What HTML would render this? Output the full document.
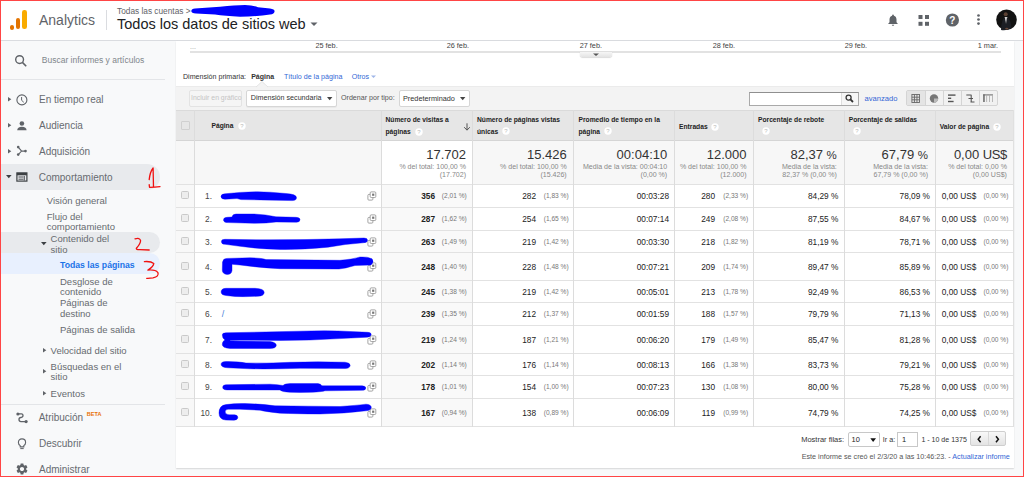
<!DOCTYPE html><html><head><meta charset="utf-8"><style>
html,body{margin:0;padding:0;}
body{width:1024px;height:477px;overflow:hidden;position:relative;background:#f8f9fa;font-family:"Liberation Sans", sans-serif;}
.t{position:absolute;white-space:nowrap;line-height:1;}
</style></head><body><div style="position:absolute;left:0px;top:0px;width:1024px;height:40px;background:#fff"></div>
<div style="position:absolute;left:0px;top:40px;width:1024px;height:1px;background:#dadce0"></div>
<div style="position:absolute;left:9.8px;top:24.5px;width:4.7px;height:5px;background:#e37400;border-radius:2.4px"></div>
<div style="position:absolute;left:15.7px;top:17.6px;width:4.7px;height:11.9px;background:#e37400;border-radius:2.4px"></div>
<div style="position:absolute;left:22px;top:10.3px;width:4.6px;height:19.2px;background:#f9ab00;border-radius:2.3px"></div>
<div class="t" style="left:39.00px;top:13.16px;font-size:14px;color:#5f6368;font-weight:normal;">Analytics</div>
<div style="position:absolute;left:106px;top:10px;width:1px;height:20px;background:#dadce0"></div>
<div class="t" style="left:117.00px;top:6.55px;font-size:8.3px;color:#5f6368;font-weight:normal;">Todas las cuentas &gt;</div>
<div class="t" style="left:117.00px;top:17.02px;font-size:14.5px;color:#202124;font-weight:normal;">Todos los datos de sitios web</div>
<svg style="position:absolute;left:0;top:0" width="300" height="30"><path fill="#0000ff" d="M191.3 10.9 Q191.5 8.6 195 8.4 L220 6.7 Q235 5.2 245 5 Q253 5.2 258 7.2 L270 8.4 Q274.6 9 274.6 11.3 Q274.4 14.3 270 14.6 Q258 16.5 240 16.7 Q225 16 215 14.6 L196 13.4 Q191.3 13.2 191.3 10.9 Z"/></svg>
<svg style="position:absolute;left:310px;top:22px" width="8" height="5"><path d="M0.5 0.5 L7.5 0.5 L4 4z" fill="#5f6368"/></svg>
<svg style="position:absolute;left:886px;top:13px" width="14" height="14" viewBox="0 0 24 24"><path fill="#5f6368" d="M12 22c1.1 0 2-.9 2-2h-4c0 1.1.9 2 2 2zm6-6v-5c0-3.07-1.64-5.64-4.5-6.32V4c0-.83-.67-1.5-1.5-1.5s-1.5.67-1.5 1.5v.68C7.63 5.36 6 7.92 6 11v5l-2 2v1h16v-1l-2-2z"/></svg>
<svg style="position:absolute;left:918px;top:15px" width="12" height="11"><rect x="0.5" y="0" width="4" height="4" fill="#5f6368"/><rect x="7" y="0" width="4" height="4" fill="#5f6368"/><rect x="0.5" y="6.8" width="4" height="4" fill="#5f6368"/><rect x="7" y="6.8" width="4" height="4" fill="#5f6368"/></svg>
<svg style="position:absolute;left:945px;top:13px" width="15" height="15" viewBox="0 0 15 15"><circle cx="7.4" cy="7" r="6.6" fill="#5f6368"/><text x="7.4" y="10.6" font-family="Liberation Sans" font-weight="bold" font-size="10" fill="#fff" text-anchor="middle">?</text></svg>
<svg style="position:absolute;left:976px;top:13px" width="5" height="13"><circle cx="2.5" cy="2.5" r="1.35" fill="#5f6368"/><circle cx="2.5" cy="6.5" r="1.35" fill="#5f6368"/><circle cx="2.5" cy="10.6" r="1.35" fill="#5f6368"/></svg>
<svg style="position:absolute;left:995px;top:8px" width="24" height="24" viewBox="0 0 24 24"><circle cx="11.5" cy="11.8" r="10.3" fill="#121212"/><path d="M9.6 9 L10.5 16.5 L12.2 16.5 L12.4 9z" fill="#cfcfcf"/><path d="M6 22 Q6.5 11 9.8 9.5 L11 16 L12 9.5 Q15.5 10.5 16.5 20 Q12 23 6 22z" fill="#1c1e24"/><circle cx="10.7" cy="6.2" r="2" fill="#5a4032"/><ellipse cx="11.8" cy="20.6" rx="1.6" ry="0.9" fill="#6a4a3a"/></svg>
<div style="position:absolute;left:0px;top:41px;width:176px;height:436px;background:#f8f9fa"></div>
<svg style="position:absolute;left:14px;top:54px" width="14" height="14" viewBox="0 0 14 14"><circle cx="5.6" cy="5.6" r="3.9" fill="none" stroke="#5f6368" stroke-width="1.4"/><path d="M8.4 8.4 L12.2 12.2" stroke="#5f6368" stroke-width="1.6"/></svg>
<div class="t" style="left:41.80px;top:56.15px;font-size:8.5px;color:#80868b;font-weight:normal;">Buscar informes y artículos</div>
<div style="position:absolute;left:0px;top:79px;width:165px;height:1px;background:#e3e5e8"></div>
<div style="position:absolute;left:0px;top:164px;width:160px;height:25.5px;background:#e8eaed;border-radius:0 13px 13px 0"></div>
<div style="position:absolute;left:0px;top:232.2px;width:160px;height:21px;background:#e8eaed;border-radius:0 11px 11px 0"></div>
<div style="position:absolute;left:0px;top:253.2px;width:160px;height:21.2px;background:#e8f0fe;border-radius:0 11px 11px 0"></div>
<svg style="position:absolute;left:7.6px;top:97.2px" width="4" height="5"><path d="M0 0 L3.3 2.2 L0 4.4z" fill="#5f6368"/></svg>
<svg style="position:absolute;left:16px;top:93.5px" width="12" height="12" viewBox="0 0 12 12"><circle cx="5.9" cy="5.9" r="5" fill="none" stroke="#5f6368" stroke-width="1.1"/><path d="M5.6 3 L5.6 6.3 L7.8 8.3" fill="none" stroke="#5f6368" stroke-width="1"/></svg>
<div class="t" style="left:39.00px;top:95.02px;font-size:10px;color:#676b70;font-weight:normal;">En tiempo real</div>
<svg style="position:absolute;left:7.6px;top:123.3px" width="4" height="5"><path d="M0 0 L3.3 2.2 L0 4.4z" fill="#5f6368"/></svg>
<svg style="position:absolute;left:16px;top:119.5px" width="12" height="12" viewBox="0 0 12 12"><circle cx="5.9" cy="3.5" r="2.3" fill="#5f6368"/><path d="M1.2 10.2 Q1.4 6.9 5.9 6.8 Q10.4 6.9 10.6 10.2z" fill="#5f6368"/></svg>
<div class="t" style="left:39.00px;top:121.02px;font-size:10px;color:#676b70;font-weight:normal;">Audiencia</div>
<svg style="position:absolute;left:7.6px;top:148.9px" width="4" height="5"><path d="M0 0 L3.3 2.2 L0 4.4z" fill="#5f6368"/></svg>
<svg style="position:absolute;left:16px;top:145px" width="12" height="12" viewBox="0 0 12 12"><circle cx="2.2" cy="2.1" r="1.3" fill="#5f6368"/><circle cx="2.2" cy="9.6" r="1.3" fill="#5f6368"/><circle cx="9.5" cy="6.1" r="1.3" fill="#5f6368"/><path d="M2.2 2.1 L5.6 6.1 L2.2 9.6 M5.6 6.1 L9.5 6.1" fill="none" stroke="#5f6368" stroke-width="1.1"/></svg>
<div class="t" style="left:39.00px;top:146.52px;font-size:10px;color:#676b70;font-weight:normal;">Adquisición</div>
<svg style="position:absolute;left:6.4px;top:174.8px" width="6" height="4"><path d="M0 0 L5.6 0 L2.8 3.3z" fill="#3c4043"/></svg>
<svg style="position:absolute;left:16px;top:171.5px" width="12" height="10" viewBox="0 0 12 10"><rect x="0.9" y="0.9" width="10" height="8.2" fill="none" stroke="#3c4043" stroke-width="1.2"/><rect x="0.9" y="0.9" width="10" height="2.4" fill="#3c4043"/><path d="M2.5 5 H7.5 M2.5 7.2 H7.5 M8.3 4 V8.5" stroke="#3c4043" stroke-width="0.9"/></svg>
<div class="t" style="left:38.70px;top:172.52px;font-size:10px;color:#676b70;font-weight:normal;">Comportamiento</div>
<div class="t" style="left:46.80px;top:196.06px;font-size:9.5px;color:#676b70;font-weight:normal;">Visión general</div>
<div class="t" style="left:46.80px;top:211.66px;font-size:9.5px;color:#676b70;font-weight:normal;">Flujo del</div>
<div class="t" style="left:46.80px;top:222.46px;font-size:9.5px;color:#676b70;font-weight:normal;">comportamiento</div>
<svg style="position:absolute;left:41px;top:241.60000000000002px" width="6" height="4"><path d="M0 0 L5.6 0 L2.8 3.3z" fill="#3c4043"/></svg>
<div class="t" style="left:50.60px;top:233.76px;font-size:9.5px;color:#676b70;font-weight:normal;">Contenido del</div>
<div class="t" style="left:50.60px;top:244.56px;font-size:9.5px;color:#676b70;font-weight:normal;">sitio</div>
<div class="t" style="left:60.00px;top:260.75px;font-size:8.7px;color:#1a73e8;font-weight:bold;">Todas las páginas</div>
<div class="t" style="left:60.00px;top:276.56px;font-size:9.5px;color:#676b70;font-weight:normal;">Desglose de</div>
<div class="t" style="left:60.00px;top:287.36px;font-size:9.5px;color:#676b70;font-weight:normal;">contenido</div>
<div class="t" style="left:60.00px;top:298.26px;font-size:9.5px;color:#676b70;font-weight:normal;">Páginas de</div>
<div class="t" style="left:60.00px;top:309.06px;font-size:9.5px;color:#676b70;font-weight:normal;">destino</div>
<div class="t" style="left:60.00px;top:325.06px;font-size:9.5px;color:#676b70;font-weight:normal;">Páginas de salida</div>
<svg style="position:absolute;left:42.5px;top:347.8px" width="4" height="5"><path d="M0 0 L3.3 2.2 L0 4.4z" fill="#5f6368"/></svg>
<div class="t" style="left:50.60px;top:345.76px;font-size:9.5px;color:#676b70;font-weight:normal;">Velocidad del sitio</div>
<svg style="position:absolute;left:42.5px;top:368.8px" width="4" height="5"><path d="M0 0 L3.3 2.2 L0 4.4z" fill="#5f6368"/></svg>
<div class="t" style="left:50.60px;top:361.56px;font-size:9.5px;color:#676b70;font-weight:normal;">Búsquedas en el</div>
<div class="t" style="left:50.60px;top:372.16px;font-size:9.5px;color:#676b70;font-weight:normal;">sitio</div>
<svg style="position:absolute;left:42.5px;top:390.6px" width="4" height="5"><path d="M0 0 L3.3 2.2 L0 4.4z" fill="#5f6368"/></svg>
<div class="t" style="left:50.60px;top:388.56px;font-size:9.5px;color:#676b70;font-weight:normal;">Eventos</div>
<div style="position:absolute;left:0px;top:404px;width:165px;height:1px;background:#e3e5e8"></div>
<svg style="position:absolute;left:16px;top:411.5px" width="12" height="12" viewBox="0 0 12 12"><circle cx="1.9" cy="2" r="1.6" fill="#5f6368"/><circle cx="10.1" cy="9.6" r="1.6" fill="#5f6368"/><path d="M1.8 1.9 H5.5 Q7 1.9 7 3.6 Q7 5.4 5 5.5 Q3 5.6 3 7.5 Q3 9.6 5 9.6 H10.2" fill="none" stroke="#5f6368" stroke-width="1.3"/></svg>
<div class="t" style="left:38.70px;top:412.92px;font-size:10px;color:#676b70;font-weight:normal;">Atribución</div>
<div class="t" style="left:86.80px;top:411.61px;font-size:5.5px;color:#e8710a;font-weight:bold;">BETA</div>
<svg style="position:absolute;left:17px;top:437.5px" width="10" height="12" viewBox="0 0 10 12"><path d="M5 0.9 Q8.6 0.9 8.6 4.4 Q8.6 6.3 6.8 7.6 V8.9 H3.2 V7.6 Q1.4 6.3 1.4 4.4 Q1.4 0.9 5 0.9z" fill="none" stroke="#5f6368" stroke-width="1.1"/><path d="M3.3 10.6 H6.7" stroke="#5f6368" stroke-width="1"/></svg>
<div class="t" style="left:39.00px;top:438.51px;font-size:10px;color:#676b70;font-weight:normal;">Descubrir</div>
<svg style="position:absolute;left:14.5px;top:462.2px" width="14" height="14" viewBox="0 0 24 24"><path fill="#5f6368" d="M19.14 12.94c.04-.3.06-.61.06-.94 0-.32-.02-.64-.07-.94l2.03-1.58c.18-.14.23-.41.12-.61l-1.92-3.32c-.12-.22-.37-.29-.59-.22l-2.39.96c-.5-.38-1.03-.7-1.62-.94l-.36-2.54c-.04-.24-.24-.41-.48-.41h-3.84c-.24 0-.43.17-.47.41l-.36 2.54c-.59.24-1.13.57-1.62.94l-2.39-.96c-.22-.08-.47 0-.59.22L2.74 8.87c-.12.21-.08.47.12.61l2.03 1.58c-.05.3-.09.63-.09.94s.02.64.07.94l-2.03 1.58c-.18.14-.23.41-.12.61l1.92 3.32c.12.22.37.29.59.22l2.39-.96c.5.38 1.03.7 1.62.94l.36 2.54c.05.24.24.41.48.41h3.84c.24 0 .44-.17.47-.41l.36-2.54c.59-.24 1.13-.56 1.62-.94l2.39.96c.22.08.47 0 .59-.22l1.92-3.32c.12-.22.07-.47-.12-.61l-2.01-1.58zM12 15.6c-1.98 0-3.6-1.62-3.6-3.6s1.62-3.6 3.6-3.6 3.6 1.62 3.6 3.6-1.62 3.6-3.6 3.6z"/></svg>
<div class="t" style="left:39.00px;top:464.51px;font-size:10px;color:#676b70;font-weight:normal;">Administrar</div>
<svg style="position:absolute;left:0;top:0;overflow:visible" width="176" height="300"><g fill="none" stroke="#f01010" stroke-width="1.3" stroke-linecap="round" stroke-linejoin="round">
<path d="M149.2 179.6 Q150 172 153.1 168 L153.5 187.1 M149.2 184.6 L149.5 187.3 Q155 187.3 160 186.7"/>
<path d="M135 238.9 Q139.8 237.3 140.6 240.6 Q140.6 243.8 136.4 248.2 Q135.6 249.7 140 249.6 L149.2 250"/>
<path d="M144.4 261.6 Q151 261.1 153.8 263.4 Q153.6 266.6 147.9 270.1 Q155.2 269.4 157.9 272.6 Q159.4 276.6 153 277.9 Q149 278.5 146.7 278.3"/>
</g></svg>
<div style="position:absolute;left:176px;top:41px;width:838px;height:427px;background:#fff;box-shadow:0 0.6px 1.2px rgba(0,0,0,.13), -0.3px 0 1px rgba(0,0,0,.05)"></div>
<div class="t" style="left:190.00px;top:42.58px;font-size:7px;color:#999;font-weight:normal;">...</div>
<div style="position:absolute;left:190px;top:51px;width:811px;height:1.5px;background:#e2e2e2"></div>
<div class="t" style="right:686.30px;top:41.63px;font-size:7.3px;color:#444;font-weight:normal;text-align:right;">25 feb.</div>
<div class="t" style="right:555.00px;top:41.63px;font-size:7.3px;color:#444;font-weight:normal;text-align:right;">26 feb.</div>
<div class="t" style="right:422.00px;top:41.63px;font-size:7.3px;color:#444;font-weight:normal;text-align:right;">27 feb.</div>
<div class="t" style="right:289.00px;top:41.63px;font-size:7.3px;color:#444;font-weight:normal;text-align:right;">28 feb.</div>
<div class="t" style="right:157.00px;top:41.63px;font-size:7.3px;color:#444;font-weight:normal;text-align:right;">29 feb.</div>
<div class="t" style="right:26.00px;top:41.63px;font-size:7.3px;color:#444;font-weight:normal;text-align:right;">1 mar.</div>
<div style="position:absolute;left:579.5px;top:52px;width:32px;height:4.8px;background:linear-gradient(#f6f6f6,#e4e4e4);border-radius:0 0 2px 2px;box-shadow:0 0.5px 1px rgba(0,0,0,.25)"></div>
<svg style="position:absolute;left:593px;top:53px" width="7" height="4"><path d="M0 0.5 L6 0.5 L3 3z" fill="#555"/></svg>
<div class="t" style="left:183.00px;top:73.53px;font-size:7.1px;color:#333;font-weight:normal;">Dimensión primaria:</div>
<div class="t" style="left:251.20px;top:73.38px;font-size:7.0px;color:#333;font-weight:bold;">Página</div>
<div class="t" style="left:284.00px;top:73.53px;font-size:7.1px;color:#3367d6;font-weight:normal;">Título de la página</div>
<div class="t" style="left:351.70px;top:73.53px;font-size:7.1px;color:#3367d6;font-weight:normal;">Otros</div>
<svg style="position:absolute;left:370.5px;top:75px" width="6" height="4"><path d="M0 0.5 L5 0.5 L2.5 3z" fill="#9fb6e8"/></svg>
<div style="position:absolute;left:176px;top:86px;width:838px;height:24px;background:#f3f3f3;border-top:1px solid #ebebeb;box-sizing:border-box"></div>
<svg style="position:absolute;left:256px;top:81px" width="12" height="7"><path d="M0 6 L6 0.5 L12 6" fill="#f3f3f3" stroke="#e0e0e0" stroke-width="0.8"/></svg>
<div style="position:absolute;left:189.4px;top:89.6px;width:52.8px;height:17px;background:#f5f5f5;border:1px solid #e3e3e3;border-radius:2px;box-sizing:border-box"></div>
<div class="t" style="left:191.00px;top:94.83px;font-size:6.9px;color:#c4c4c4;font-weight:normal;">Incluir en gráfico</div>
<div style="position:absolute;left:246px;top:89.6px;width:91px;height:17px;background:#fff;border:1px solid #d6d6d6;border-radius:2px;box-sizing:border-box;box-shadow:0 1px 0 rgba(0,0,0,.04)"></div>
<div class="t" style="left:250.80px;top:94.91px;font-size:7.15px;color:#333;font-weight:normal;">Dimensión secundaria</div>
<svg style="position:absolute;left:327px;top:96.5px" width="6" height="4"><path d="M0 0 L5.4 0 L2.7 3.2z" fill="#444"/></svg>
<div class="t" style="left:341.00px;top:94.73px;font-size:7.1px;color:#555;font-weight:normal;">Ordenar por tipo:</div>
<div style="position:absolute;left:398.5px;top:89.6px;width:71.1px;height:17px;background:#fff;border:1px solid #d6d6d6;border-radius:2px;box-sizing:border-box"></div>
<div class="t" style="left:403.00px;top:94.63px;font-size:7.3px;color:#333;font-weight:normal;">Predeterminado</div>
<svg style="position:absolute;left:459.5px;top:96.5px" width="6" height="4"><path d="M0 0 L5.4 0 L2.7 3.2z" fill="#444"/></svg>
<div style="position:absolute;left:748.5px;top:91.6px;width:110.5px;height:14px;background:#fff;border:1px solid #a9a9a9;border-top-color:#8f8f8f;box-sizing:border-box"></div>
<div style="position:absolute;left:841px;top:92.6px;width:17px;height:12px;background:#f6f6f6;border-left:1px solid #dedede;box-sizing:border-box"></div>
<svg style="position:absolute;left:845px;top:94px" width="9" height="9" viewBox="0 0 9 9"><circle cx="3.6" cy="3.6" r="2.5" fill="none" stroke="#333" stroke-width="1.3"/><path d="M5.4 5.4 L8 8" stroke="#333" stroke-width="1.8"/></svg>
<div class="t" style="left:864.50px;top:94.89px;font-size:7.6px;color:#3367d6;font-weight:normal;">avanzado</div>
<div style="position:absolute;left:906.4px;top:90.4px;width:91.3px;height:15.8px;background:#f1f1f1;border:1px solid #d4d4d4;border-radius:2px;box-sizing:border-box"></div>
<div style="position:absolute;left:907.4px;top:91.4px;width:17.5px;height:13.8px;background:#e4e4e4"></div>
<div style="position:absolute;left:924.9px;top:91px;width:1px;height:14.6px;background:#d4d4d4"></div>
<div style="position:absolute;left:943px;top:91px;width:1px;height:14.6px;background:#d4d4d4"></div>
<div style="position:absolute;left:961.2px;top:91px;width:1px;height:14.6px;background:#d4d4d4"></div>
<div style="position:absolute;left:979.3px;top:91px;width:1px;height:14.6px;background:#d4d4d4"></div>
<svg style="position:absolute;left:904px;top:88px" width="96" height="20"><g fill="none" stroke="#666" stroke-width="0.9">
<rect x="7.9" y="6.5" width="7.6" height="8"/><path d="M10.45 6.5 V14.5 M12.95 6.5 V14.5 M7.9 9.2 H15.5 M7.9 11.8 H15.5"/></g>
<circle cx="30" cy="10.5" r="4.2" fill="#777"/><path d="M30 10.5 H34.2 A4.2 4.2 0 0 1 30 14.7z" fill="#bbb"/>
<g fill="#555"><rect x="44" y="6.4" width="7.5" height="1.4"/><rect x="44" y="9.6" width="3.2" height="1.4"/><rect x="44" y="12.8" width="5.6" height="1.4"/></g>
<path d="M62.3 7 H67.5 M67.2 7 V14 M64.5 10.5 H69 M66.5 14 H70.5" fill="none" stroke="#555" stroke-width="1.1"/>
<g fill="#666"><rect x="79.2" y="6.4" width="9.8" height="1"/><rect x="79.2" y="6.4" width="1.5" height="7.6"/></g><g fill="#aaa"><rect x="82.3" y="6.4" width="0.8" height="7.6"/><rect x="85" y="6.4" width="0.8" height="7.6"/><rect x="88" y="6.4" width="0.8" height="7.6"/></g>
</svg>
<div style="position:absolute;left:176px;top:110px;width:838px;height:30px;background:#e6e6e6"></div>
<div style="position:absolute;left:176px;top:109.5px;width:838px;height:1px;background:#dadada"></div>
<div style="position:absolute;left:176px;top:140px;width:838px;height:1px;background:#d5d5d5"></div>
<div style="position:absolute;left:176px;top:141px;width:205px;height:43px;background:#f7f7f7"></div>
<div style="position:absolute;left:472px;top:141px;width:542px;height:43px;background:#f7f7f7"></div>
<div style="position:absolute;left:176px;top:184px;width:18px;height:242px;background:#f8f8f8"></div>
<div style="position:absolute;left:381px;top:184px;width:91px;height:242px;background:#f9f9f9"></div>
<div style="position:absolute;left:176px;top:184px;width:838px;height:1px;background:#e2e2e2"></div>
<div style="position:absolute;left:176px;top:207px;width:838px;height:1px;background:#e2e2e2"></div>
<div style="position:absolute;left:176px;top:230px;width:838px;height:1px;background:#e2e2e2"></div>
<div style="position:absolute;left:176px;top:252px;width:838px;height:1px;background:#e2e2e2"></div>
<div style="position:absolute;left:176px;top:280px;width:838px;height:1px;background:#e2e2e2"></div>
<div style="position:absolute;left:176px;top:302px;width:838px;height:1px;background:#e2e2e2"></div>
<div style="position:absolute;left:176px;top:325px;width:838px;height:1px;background:#e2e2e2"></div>
<div style="position:absolute;left:176px;top:353px;width:838px;height:1px;background:#e2e2e2"></div>
<div style="position:absolute;left:176px;top:375px;width:838px;height:1px;background:#e2e2e2"></div>
<div style="position:absolute;left:176px;top:398px;width:838px;height:1px;background:#e2e2e2"></div>
<div style="position:absolute;left:176px;top:426px;width:838px;height:1px;background:#e2e2e2"></div>
<div style="position:absolute;left:194px;top:110px;width:1px;height:317px;background:#dcdcdc"></div>
<div style="position:absolute;left:381px;top:110px;width:1px;height:317px;background:#dcdcdc"></div>
<div style="position:absolute;left:472px;top:110px;width:1px;height:317px;background:#dcdcdc"></div>
<div style="position:absolute;left:573px;top:110px;width:1px;height:317px;background:#dcdcdc"></div>
<div style="position:absolute;left:674px;top:110px;width:1px;height:317px;background:#dcdcdc"></div>
<div style="position:absolute;left:753px;top:110px;width:1px;height:317px;background:#dcdcdc"></div>
<div style="position:absolute;left:844px;top:110px;width:1px;height:317px;background:#dcdcdc"></div>
<div style="position:absolute;left:935px;top:110px;width:1px;height:317px;background:#dcdcdc"></div>
<div style="position:absolute;left:1013px;top:110px;width:1px;height:317px;background:#e0e0e0"></div>
<div class="t" style="left:211.50px;top:122.93px;font-size:6.7px;color:#222;font-weight:bold;">Página</div>
<svg style="position:absolute;left:238.30px;top:121.50px" width="8" height="8" viewBox="0 0 8 8"><circle cx="4" cy="4" r="3.7" fill="#fff"/><text x="4" y="6.3" font-family="Liberation Sans" font-size="6" fill="#bbb" text-anchor="middle">?</text></svg>
<div style="position:absolute;left:181px;top:121.3px;width:9px;height:8.3px;border:1px solid #d0d0d0;box-sizing:border-box;border-radius:1px"></div>
<div class="t" style="left:385.50px;top:117.13px;font-size:6.7px;color:#222;font-weight:bold;">Número de visitas a</div>
<div class="t" style="left:385.50px;top:128.73px;font-size:6.7px;color:#222;font-weight:bold;">páginas</div>
<svg style="position:absolute;left:415.00px;top:127.60px" width="8" height="8" viewBox="0 0 8 8"><circle cx="4" cy="4" r="3.7" fill="#fff"/><text x="4" y="6.3" font-family="Liberation Sans" font-size="6" fill="#bbb" text-anchor="middle">?</text></svg>
<svg style="position:absolute;left:463px;top:123px" width="8" height="8" viewBox="0 0 8 8"><path d="M4 0.3 V7 M1.2 4.2 L4 7.2 L6.8 4.2" fill="none" stroke="#555" stroke-width="1"/></svg>
<div class="t" style="left:477.00px;top:116.93px;font-size:6.7px;color:#222;font-weight:bold;">Número de páginas vistas</div>
<div class="t" style="left:477.00px;top:128.53px;font-size:6.7px;color:#222;font-weight:bold;">únicas</div>
<svg style="position:absolute;left:502.20px;top:127.40px" width="8" height="8" viewBox="0 0 8 8"><circle cx="4" cy="4" r="3.7" fill="#fff"/><text x="4" y="6.3" font-family="Liberation Sans" font-size="6" fill="#bbb" text-anchor="middle">?</text></svg>
<div class="t" style="left:578.50px;top:116.93px;font-size:6.7px;color:#222;font-weight:bold;">Promedio de tiempo en la</div>
<div class="t" style="left:578.50px;top:128.53px;font-size:6.7px;color:#222;font-weight:bold;">página</div>
<svg style="position:absolute;left:604.00px;top:127.40px" width="8" height="8" viewBox="0 0 8 8"><circle cx="4" cy="4" r="3.7" fill="#fff"/><text x="4" y="6.3" font-family="Liberation Sans" font-size="6" fill="#bbb" text-anchor="middle">?</text></svg>
<div class="t" style="left:679.00px;top:124.33px;font-size:6.7px;color:#222;font-weight:bold;">Entradas</div>
<svg style="position:absolute;left:711.10px;top:123.00px" width="8" height="8" viewBox="0 0 8 8"><circle cx="4" cy="4" r="3.7" fill="#fff"/><text x="4" y="6.3" font-family="Liberation Sans" font-size="6" fill="#bbb" text-anchor="middle">?</text></svg>
<div class="t" style="left:758.00px;top:116.93px;font-size:6.7px;color:#222;font-weight:bold;">Porcentaje de rebote</div>
<svg style="position:absolute;left:762.30px;top:127.00px" width="8" height="8" viewBox="0 0 8 8"><circle cx="4" cy="4" r="3.7" fill="#fff"/><text x="4" y="6.3" font-family="Liberation Sans" font-size="6" fill="#bbb" text-anchor="middle">?</text></svg>
<div class="t" style="left:848.70px;top:116.93px;font-size:6.7px;color:#222;font-weight:bold;">Porcentaje de salidas</div>
<svg style="position:absolute;left:853.00px;top:127.00px" width="8" height="8" viewBox="0 0 8 8"><circle cx="4" cy="4" r="3.7" fill="#fff"/><text x="4" y="6.3" font-family="Liberation Sans" font-size="6" fill="#bbb" text-anchor="middle">?</text></svg>
<div class="t" style="left:939.70px;top:124.33px;font-size:6.7px;color:#222;font-weight:bold;">Valor de página</div>
<svg style="position:absolute;left:993.30px;top:123.20px" width="8" height="8" viewBox="0 0 8 8"><circle cx="4" cy="4" r="3.7" fill="#fff"/><text x="4" y="6.3" font-family="Liberation Sans" font-size="6" fill="#bbb" text-anchor="middle">?</text></svg>
<div class="t" style="right:558.00px;top:148.35px;font-size:13px;color:#333;font-weight:normal;text-align:right;">17.702</div>
<div class="t" style="right:558.00px;top:162.76px;font-size:7.05px;color:#888;font-weight:normal;text-align:right;">% del total: 100,00 %</div>
<div class="t" style="right:558.00px;top:170.76px;font-size:7.05px;color:#888;font-weight:normal;text-align:right;">(17.702)</div>
<div class="t" style="right:457.30px;top:148.35px;font-size:13px;color:#333;font-weight:normal;text-align:right;">15.426</div>
<div class="t" style="right:457.30px;top:162.76px;font-size:7.05px;color:#888;font-weight:normal;text-align:right;">% del total: 100,00 %</div>
<div class="t" style="right:457.30px;top:170.76px;font-size:7.05px;color:#888;font-weight:normal;text-align:right;">(15.426)</div>
<div class="t" style="right:356.80px;top:148.35px;font-size:13px;color:#333;font-weight:normal;text-align:right;">00:04:10</div>
<div class="t" style="right:356.80px;top:162.76px;font-size:7.05px;color:#888;font-weight:normal;text-align:right;">Media de la vista: 00:04:10</div>
<div class="t" style="right:356.80px;top:170.76px;font-size:7.05px;color:#888;font-weight:normal;text-align:right;">(0,00 %)</div>
<div class="t" style="right:277.50px;top:148.35px;font-size:13px;color:#333;font-weight:normal;text-align:right;">12.000</div>
<div class="t" style="right:277.50px;top:162.76px;font-size:7.05px;color:#888;font-weight:normal;text-align:right;">% del total: 100,00 %</div>
<div class="t" style="right:277.50px;top:170.76px;font-size:7.05px;color:#888;font-weight:normal;text-align:right;">(12.000)</div>
<div class="t" style="right:187.20px;top:148.35px;font-size:13px;color:#333;font-weight:normal;text-align:right;">82,37 <span style="font-size:11.5px">%</span></div>
<div class="t" style="right:187.20px;top:162.76px;font-size:7.05px;color:#888;font-weight:normal;text-align:right;">Media de la vista:</div>
<div class="t" style="right:187.20px;top:170.76px;font-size:7.05px;color:#888;font-weight:normal;text-align:right;">82,37 % (0,00 %)</div>
<div class="t" style="right:96.00px;top:148.35px;font-size:13px;color:#333;font-weight:normal;text-align:right;">67,79 <span style="font-size:11.5px">%</span></div>
<div class="t" style="right:96.00px;top:162.76px;font-size:7.05px;color:#888;font-weight:normal;text-align:right;">Media de la vista:</div>
<div class="t" style="right:96.00px;top:170.76px;font-size:7.05px;color:#888;font-weight:normal;text-align:right;">67,79 % (0,00 %)</div>
<div class="t" style="right:17.10px;top:148.35px;font-size:13px;color:#333;font-weight:normal;text-align:right;">0,00 <span style="letter-spacing:-0.4px">US$</span></div>
<div class="t" style="right:17.10px;top:162.76px;font-size:7.05px;color:#888;font-weight:normal;text-align:right;">% del total: 0,00 %</div>
<div class="t" style="right:17.10px;top:170.76px;font-size:7.05px;color:#888;font-weight:normal;text-align:right;">(0,00 US$)</div>
<div style="position:absolute;left:181px;top:191.4px;width:8px;height:8px;background:#ededed;border:1px solid #c9c9c9;border-radius:1.5px;box-sizing:border-box"></div>
<div class="t" style="right:812.00px;top:192.05px;font-size:8.3px;color:#444;font-weight:normal;text-align:right;">1.</div>
<svg style="position:absolute;left:367px;top:191.10px" width="10" height="10" viewBox="0 0 10 10"><rect x="3.2" y="0.9" width="5.6" height="5.6" rx="1" fill="#fff" stroke="#9a9a9a" stroke-width="0.9"/><rect x="5.1" y="2.6" width="2.2" height="2.2" fill="#777"/><path d="M3 3.4 H1.9 Q0.9 3.4 0.9 4.4 V8.2 Q0.9 9.1 1.9 9.1 H4.9 Q5.9 9.1 5.9 8.1 V7" fill="none" stroke="#9a9a9a" stroke-width="0.9"/></svg>
<div class="t" style="right:589.00px;top:192.05px;font-size:8.3px;color:#222;font-weight:bold;text-align:right;">356</div>
<div class="t" style="right:557.30px;top:193.28px;font-size:6.6px;color:#777;font-weight:normal;text-align:right;">(2,01 %)</div>
<div class="t" style="right:488.00px;top:192.05px;font-size:8.3px;color:#222;font-weight:normal;text-align:right;">282</div>
<div class="t" style="right:455.40px;top:193.28px;font-size:6.6px;color:#777;font-weight:normal;text-align:right;">(1,83 %)</div>
<div class="t" style="right:355.00px;top:192.05px;font-size:8.3px;color:#222;font-weight:normal;text-align:right;">00:03:28</div>
<div class="t" style="right:309.00px;top:192.05px;font-size:8.3px;color:#222;font-weight:normal;text-align:right;">280</div>
<div class="t" style="right:275.90px;top:193.28px;font-size:6.6px;color:#777;font-weight:normal;text-align:right;">(2,33 %)</div>
<div class="t" style="right:185.60px;top:192.05px;font-size:8.3px;color:#222;font-weight:normal;text-align:right;">84,29 %</div>
<div class="t" style="right:94.00px;top:192.05px;font-size:8.3px;color:#222;font-weight:normal;text-align:right;">78,09 %</div>
<div class="t" style="right:47.70px;top:192.05px;font-size:8.3px;color:#222;font-weight:normal;text-align:right;">0,00 US$</div>
<div class="t" style="right:15.60px;top:193.28px;font-size:6.6px;color:#777;font-weight:normal;text-align:right;">(0,00 %)</div>
<div style="position:absolute;left:181px;top:214.4px;width:8px;height:8px;background:#ededed;border:1px solid #c9c9c9;border-radius:1.5px;box-sizing:border-box"></div>
<div class="t" style="right:812.00px;top:215.05px;font-size:8.3px;color:#444;font-weight:normal;text-align:right;">2.</div>
<svg style="position:absolute;left:367px;top:214.10px" width="10" height="10" viewBox="0 0 10 10"><rect x="3.2" y="0.9" width="5.6" height="5.6" rx="1" fill="#fff" stroke="#9a9a9a" stroke-width="0.9"/><rect x="5.1" y="2.6" width="2.2" height="2.2" fill="#777"/><path d="M3 3.4 H1.9 Q0.9 3.4 0.9 4.4 V8.2 Q0.9 9.1 1.9 9.1 H4.9 Q5.9 9.1 5.9 8.1 V7" fill="none" stroke="#9a9a9a" stroke-width="0.9"/></svg>
<div class="t" style="right:589.00px;top:215.05px;font-size:8.3px;color:#222;font-weight:bold;text-align:right;">287</div>
<div class="t" style="right:557.30px;top:216.28px;font-size:6.6px;color:#777;font-weight:normal;text-align:right;">(1,62 %)</div>
<div class="t" style="right:488.00px;top:215.05px;font-size:8.3px;color:#222;font-weight:normal;text-align:right;">254</div>
<div class="t" style="right:455.40px;top:216.28px;font-size:6.6px;color:#777;font-weight:normal;text-align:right;">(1,65 %)</div>
<div class="t" style="right:355.00px;top:215.05px;font-size:8.3px;color:#222;font-weight:normal;text-align:right;">00:07:14</div>
<div class="t" style="right:309.00px;top:215.05px;font-size:8.3px;color:#222;font-weight:normal;text-align:right;">249</div>
<div class="t" style="right:275.90px;top:216.28px;font-size:6.6px;color:#777;font-weight:normal;text-align:right;">(2,08 %)</div>
<div class="t" style="right:185.60px;top:215.05px;font-size:8.3px;color:#222;font-weight:normal;text-align:right;">87,55 %</div>
<div class="t" style="right:94.00px;top:215.05px;font-size:8.3px;color:#222;font-weight:normal;text-align:right;">84,67 %</div>
<div class="t" style="right:47.70px;top:215.05px;font-size:8.3px;color:#222;font-weight:normal;text-align:right;">0,00 US$</div>
<div class="t" style="right:15.60px;top:216.28px;font-size:6.6px;color:#777;font-weight:normal;text-align:right;">(0,00 %)</div>
<div style="position:absolute;left:181px;top:236.9px;width:8px;height:8px;background:#ededed;border:1px solid #c9c9c9;border-radius:1.5px;box-sizing:border-box"></div>
<div class="t" style="right:812.00px;top:237.55px;font-size:8.3px;color:#444;font-weight:normal;text-align:right;">3.</div>
<svg style="position:absolute;left:367px;top:236.60px" width="10" height="10" viewBox="0 0 10 10"><rect x="3.2" y="0.9" width="5.6" height="5.6" rx="1" fill="#fff" stroke="#9a9a9a" stroke-width="0.9"/><rect x="5.1" y="2.6" width="2.2" height="2.2" fill="#777"/><path d="M3 3.4 H1.9 Q0.9 3.4 0.9 4.4 V8.2 Q0.9 9.1 1.9 9.1 H4.9 Q5.9 9.1 5.9 8.1 V7" fill="none" stroke="#9a9a9a" stroke-width="0.9"/></svg>
<div class="t" style="right:589.00px;top:237.55px;font-size:8.3px;color:#222;font-weight:bold;text-align:right;">263</div>
<div class="t" style="right:557.30px;top:238.78px;font-size:6.6px;color:#777;font-weight:normal;text-align:right;">(1,49 %)</div>
<div class="t" style="right:488.00px;top:237.55px;font-size:8.3px;color:#222;font-weight:normal;text-align:right;">219</div>
<div class="t" style="right:455.40px;top:238.78px;font-size:6.6px;color:#777;font-weight:normal;text-align:right;">(1,42 %)</div>
<div class="t" style="right:355.00px;top:237.55px;font-size:8.3px;color:#222;font-weight:normal;text-align:right;">00:03:30</div>
<div class="t" style="right:309.00px;top:237.55px;font-size:8.3px;color:#222;font-weight:normal;text-align:right;">218</div>
<div class="t" style="right:275.90px;top:238.78px;font-size:6.6px;color:#777;font-weight:normal;text-align:right;">(1,82 %)</div>
<div class="t" style="right:185.60px;top:237.55px;font-size:8.3px;color:#222;font-weight:normal;text-align:right;">81,19 %</div>
<div class="t" style="right:94.00px;top:237.55px;font-size:8.3px;color:#222;font-weight:normal;text-align:right;">78,71 %</div>
<div class="t" style="right:47.70px;top:237.55px;font-size:8.3px;color:#222;font-weight:normal;text-align:right;">0,00 US$</div>
<div class="t" style="right:15.60px;top:238.78px;font-size:6.6px;color:#777;font-weight:normal;text-align:right;">(0,00 %)</div>
<div style="position:absolute;left:181px;top:261.90000000000003px;width:8px;height:8px;background:#ededed;border:1px solid #c9c9c9;border-radius:1.5px;box-sizing:border-box"></div>
<div class="t" style="right:812.00px;top:262.55px;font-size:8.3px;color:#444;font-weight:normal;text-align:right;">4.</div>
<svg style="position:absolute;left:367px;top:261.60px" width="10" height="10" viewBox="0 0 10 10"><rect x="3.2" y="0.9" width="5.6" height="5.6" rx="1" fill="#fff" stroke="#9a9a9a" stroke-width="0.9"/><rect x="5.1" y="2.6" width="2.2" height="2.2" fill="#777"/><path d="M3 3.4 H1.9 Q0.9 3.4 0.9 4.4 V8.2 Q0.9 9.1 1.9 9.1 H4.9 Q5.9 9.1 5.9 8.1 V7" fill="none" stroke="#9a9a9a" stroke-width="0.9"/></svg>
<div class="t" style="right:589.00px;top:262.55px;font-size:8.3px;color:#222;font-weight:bold;text-align:right;">248</div>
<div class="t" style="right:557.30px;top:263.78px;font-size:6.6px;color:#777;font-weight:normal;text-align:right;">(1,40 %)</div>
<div class="t" style="right:488.00px;top:262.55px;font-size:8.3px;color:#222;font-weight:normal;text-align:right;">228</div>
<div class="t" style="right:455.40px;top:263.78px;font-size:6.6px;color:#777;font-weight:normal;text-align:right;">(1,48 %)</div>
<div class="t" style="right:355.00px;top:262.55px;font-size:8.3px;color:#222;font-weight:normal;text-align:right;">00:07:21</div>
<div class="t" style="right:309.00px;top:262.55px;font-size:8.3px;color:#222;font-weight:normal;text-align:right;">209</div>
<div class="t" style="right:275.90px;top:263.78px;font-size:6.6px;color:#777;font-weight:normal;text-align:right;">(1,74 %)</div>
<div class="t" style="right:185.60px;top:262.55px;font-size:8.3px;color:#222;font-weight:normal;text-align:right;">89,47 %</div>
<div class="t" style="right:94.00px;top:262.55px;font-size:8.3px;color:#222;font-weight:normal;text-align:right;">85,89 %</div>
<div class="t" style="right:47.70px;top:262.55px;font-size:8.3px;color:#222;font-weight:normal;text-align:right;">0,00 US$</div>
<div class="t" style="right:15.60px;top:263.78px;font-size:6.6px;color:#777;font-weight:normal;text-align:right;">(0,00 %)</div>
<div style="position:absolute;left:181px;top:286.90000000000003px;width:8px;height:8px;background:#ededed;border:1px solid #c9c9c9;border-radius:1.5px;box-sizing:border-box"></div>
<div class="t" style="right:812.00px;top:287.55px;font-size:8.3px;color:#444;font-weight:normal;text-align:right;">5.</div>
<svg style="position:absolute;left:367px;top:286.60px" width="10" height="10" viewBox="0 0 10 10"><rect x="3.2" y="0.9" width="5.6" height="5.6" rx="1" fill="#fff" stroke="#9a9a9a" stroke-width="0.9"/><rect x="5.1" y="2.6" width="2.2" height="2.2" fill="#777"/><path d="M3 3.4 H1.9 Q0.9 3.4 0.9 4.4 V8.2 Q0.9 9.1 1.9 9.1 H4.9 Q5.9 9.1 5.9 8.1 V7" fill="none" stroke="#9a9a9a" stroke-width="0.9"/></svg>
<div class="t" style="right:589.00px;top:287.55px;font-size:8.3px;color:#222;font-weight:bold;text-align:right;">245</div>
<div class="t" style="right:557.30px;top:288.78px;font-size:6.6px;color:#777;font-weight:normal;text-align:right;">(1,38 %)</div>
<div class="t" style="right:488.00px;top:287.55px;font-size:8.3px;color:#222;font-weight:normal;text-align:right;">219</div>
<div class="t" style="right:455.40px;top:288.78px;font-size:6.6px;color:#777;font-weight:normal;text-align:right;">(1,42 %)</div>
<div class="t" style="right:355.00px;top:287.55px;font-size:8.3px;color:#222;font-weight:normal;text-align:right;">00:05:01</div>
<div class="t" style="right:309.00px;top:287.55px;font-size:8.3px;color:#222;font-weight:normal;text-align:right;">213</div>
<div class="t" style="right:275.90px;top:288.78px;font-size:6.6px;color:#777;font-weight:normal;text-align:right;">(1,78 %)</div>
<div class="t" style="right:185.60px;top:287.55px;font-size:8.3px;color:#222;font-weight:normal;text-align:right;">92,49 %</div>
<div class="t" style="right:94.00px;top:287.55px;font-size:8.3px;color:#222;font-weight:normal;text-align:right;">86,53 %</div>
<div class="t" style="right:47.70px;top:287.55px;font-size:8.3px;color:#222;font-weight:normal;text-align:right;">0,00 US$</div>
<div class="t" style="right:15.60px;top:288.78px;font-size:6.6px;color:#777;font-weight:normal;text-align:right;">(0,00 %)</div>
<div style="position:absolute;left:181px;top:309.40000000000003px;width:8px;height:8px;background:#ededed;border:1px solid #c9c9c9;border-radius:1.5px;box-sizing:border-box"></div>
<div class="t" style="right:812.00px;top:310.05px;font-size:8.3px;color:#444;font-weight:normal;text-align:right;">6.</div>
<svg style="position:absolute;left:367px;top:309.10px" width="10" height="10" viewBox="0 0 10 10"><rect x="3.2" y="0.9" width="5.6" height="5.6" rx="1" fill="#fff" stroke="#9a9a9a" stroke-width="0.9"/><rect x="5.1" y="2.6" width="2.2" height="2.2" fill="#777"/><path d="M3 3.4 H1.9 Q0.9 3.4 0.9 4.4 V8.2 Q0.9 9.1 1.9 9.1 H4.9 Q5.9 9.1 5.9 8.1 V7" fill="none" stroke="#9a9a9a" stroke-width="0.9"/></svg>
<div class="t" style="right:589.00px;top:310.05px;font-size:8.3px;color:#222;font-weight:bold;text-align:right;">239</div>
<div class="t" style="right:557.30px;top:311.28px;font-size:6.6px;color:#777;font-weight:normal;text-align:right;">(1,35 %)</div>
<div class="t" style="right:488.00px;top:310.05px;font-size:8.3px;color:#222;font-weight:normal;text-align:right;">212</div>
<div class="t" style="right:455.40px;top:311.28px;font-size:6.6px;color:#777;font-weight:normal;text-align:right;">(1,37 %)</div>
<div class="t" style="right:355.00px;top:310.05px;font-size:8.3px;color:#222;font-weight:normal;text-align:right;">00:01:59</div>
<div class="t" style="right:309.00px;top:310.05px;font-size:8.3px;color:#222;font-weight:normal;text-align:right;">188</div>
<div class="t" style="right:275.90px;top:311.28px;font-size:6.6px;color:#777;font-weight:normal;text-align:right;">(1,57 %)</div>
<div class="t" style="right:185.60px;top:310.05px;font-size:8.3px;color:#222;font-weight:normal;text-align:right;">79,79 %</div>
<div class="t" style="right:94.00px;top:310.05px;font-size:8.3px;color:#222;font-weight:normal;text-align:right;">71,13 %</div>
<div class="t" style="right:47.70px;top:310.05px;font-size:8.3px;color:#222;font-weight:normal;text-align:right;">0,00 US$</div>
<div class="t" style="right:15.60px;top:311.28px;font-size:6.6px;color:#777;font-weight:normal;text-align:right;">(0,00 %)</div>
<div style="position:absolute;left:181px;top:334.90000000000003px;width:8px;height:8px;background:#ededed;border:1px solid #c9c9c9;border-radius:1.5px;box-sizing:border-box"></div>
<div class="t" style="right:812.00px;top:335.55px;font-size:8.3px;color:#444;font-weight:normal;text-align:right;">7.</div>
<svg style="position:absolute;left:367px;top:334.60px" width="10" height="10" viewBox="0 0 10 10"><rect x="3.2" y="0.9" width="5.6" height="5.6" rx="1" fill="#fff" stroke="#9a9a9a" stroke-width="0.9"/><rect x="5.1" y="2.6" width="2.2" height="2.2" fill="#777"/><path d="M3 3.4 H1.9 Q0.9 3.4 0.9 4.4 V8.2 Q0.9 9.1 1.9 9.1 H4.9 Q5.9 9.1 5.9 8.1 V7" fill="none" stroke="#9a9a9a" stroke-width="0.9"/></svg>
<div class="t" style="right:589.00px;top:335.55px;font-size:8.3px;color:#222;font-weight:bold;text-align:right;">219</div>
<div class="t" style="right:557.30px;top:336.78px;font-size:6.6px;color:#777;font-weight:normal;text-align:right;">(1,24 %)</div>
<div class="t" style="right:488.00px;top:335.55px;font-size:8.3px;color:#222;font-weight:normal;text-align:right;">187</div>
<div class="t" style="right:455.40px;top:336.78px;font-size:6.6px;color:#777;font-weight:normal;text-align:right;">(1,21 %)</div>
<div class="t" style="right:355.00px;top:335.55px;font-size:8.3px;color:#222;font-weight:normal;text-align:right;">00:06:20</div>
<div class="t" style="right:309.00px;top:335.55px;font-size:8.3px;color:#222;font-weight:normal;text-align:right;">179</div>
<div class="t" style="right:275.90px;top:336.78px;font-size:6.6px;color:#777;font-weight:normal;text-align:right;">(1,49 %)</div>
<div class="t" style="right:185.60px;top:335.55px;font-size:8.3px;color:#222;font-weight:normal;text-align:right;">85,47 %</div>
<div class="t" style="right:94.00px;top:335.55px;font-size:8.3px;color:#222;font-weight:normal;text-align:right;">81,28 %</div>
<div class="t" style="right:47.70px;top:335.55px;font-size:8.3px;color:#222;font-weight:normal;text-align:right;">0,00 US$</div>
<div class="t" style="right:15.60px;top:336.78px;font-size:6.6px;color:#777;font-weight:normal;text-align:right;">(0,00 %)</div>
<div style="position:absolute;left:181px;top:359.90000000000003px;width:8px;height:8px;background:#ededed;border:1px solid #c9c9c9;border-radius:1.5px;box-sizing:border-box"></div>
<div class="t" style="right:812.00px;top:360.55px;font-size:8.3px;color:#444;font-weight:normal;text-align:right;">8.</div>
<svg style="position:absolute;left:367px;top:359.60px" width="10" height="10" viewBox="0 0 10 10"><rect x="3.2" y="0.9" width="5.6" height="5.6" rx="1" fill="#fff" stroke="#9a9a9a" stroke-width="0.9"/><rect x="5.1" y="2.6" width="2.2" height="2.2" fill="#777"/><path d="M3 3.4 H1.9 Q0.9 3.4 0.9 4.4 V8.2 Q0.9 9.1 1.9 9.1 H4.9 Q5.9 9.1 5.9 8.1 V7" fill="none" stroke="#9a9a9a" stroke-width="0.9"/></svg>
<div class="t" style="right:589.00px;top:360.55px;font-size:8.3px;color:#222;font-weight:bold;text-align:right;">202</div>
<div class="t" style="right:557.30px;top:361.78px;font-size:6.6px;color:#777;font-weight:normal;text-align:right;">(1,14 %)</div>
<div class="t" style="right:488.00px;top:360.55px;font-size:8.3px;color:#222;font-weight:normal;text-align:right;">176</div>
<div class="t" style="right:455.40px;top:361.78px;font-size:6.6px;color:#777;font-weight:normal;text-align:right;">(1,14 %)</div>
<div class="t" style="right:355.00px;top:360.55px;font-size:8.3px;color:#222;font-weight:normal;text-align:right;">00:08:13</div>
<div class="t" style="right:309.00px;top:360.55px;font-size:8.3px;color:#222;font-weight:normal;text-align:right;">166</div>
<div class="t" style="right:275.90px;top:361.78px;font-size:6.6px;color:#777;font-weight:normal;text-align:right;">(1,38 %)</div>
<div class="t" style="right:185.60px;top:360.55px;font-size:8.3px;color:#222;font-weight:normal;text-align:right;">83,73 %</div>
<div class="t" style="right:94.00px;top:360.55px;font-size:8.3px;color:#222;font-weight:normal;text-align:right;">79,21 %</div>
<div class="t" style="right:47.70px;top:360.55px;font-size:8.3px;color:#222;font-weight:normal;text-align:right;">0,00 US$</div>
<div class="t" style="right:15.60px;top:361.78px;font-size:6.6px;color:#777;font-weight:normal;text-align:right;">(0,00 %)</div>
<div style="position:absolute;left:181px;top:382.40000000000003px;width:8px;height:8px;background:#ededed;border:1px solid #c9c9c9;border-radius:1.5px;box-sizing:border-box"></div>
<div class="t" style="right:812.00px;top:383.05px;font-size:8.3px;color:#444;font-weight:normal;text-align:right;">9.</div>
<svg style="position:absolute;left:367px;top:382.10px" width="10" height="10" viewBox="0 0 10 10"><rect x="3.2" y="0.9" width="5.6" height="5.6" rx="1" fill="#fff" stroke="#9a9a9a" stroke-width="0.9"/><rect x="5.1" y="2.6" width="2.2" height="2.2" fill="#777"/><path d="M3 3.4 H1.9 Q0.9 3.4 0.9 4.4 V8.2 Q0.9 9.1 1.9 9.1 H4.9 Q5.9 9.1 5.9 8.1 V7" fill="none" stroke="#9a9a9a" stroke-width="0.9"/></svg>
<div class="t" style="right:589.00px;top:383.05px;font-size:8.3px;color:#222;font-weight:bold;text-align:right;">178</div>
<div class="t" style="right:557.30px;top:384.28px;font-size:6.6px;color:#777;font-weight:normal;text-align:right;">(1,01 %)</div>
<div class="t" style="right:488.00px;top:383.05px;font-size:8.3px;color:#222;font-weight:normal;text-align:right;">154</div>
<div class="t" style="right:455.40px;top:384.28px;font-size:6.6px;color:#777;font-weight:normal;text-align:right;">(1,00 %)</div>
<div class="t" style="right:355.00px;top:383.05px;font-size:8.3px;color:#222;font-weight:normal;text-align:right;">00:07:23</div>
<div class="t" style="right:309.00px;top:383.05px;font-size:8.3px;color:#222;font-weight:normal;text-align:right;">130</div>
<div class="t" style="right:275.90px;top:384.28px;font-size:6.6px;color:#777;font-weight:normal;text-align:right;">(1,08 %)</div>
<div class="t" style="right:185.60px;top:383.05px;font-size:8.3px;color:#222;font-weight:normal;text-align:right;">80,00 %</div>
<div class="t" style="right:94.00px;top:383.05px;font-size:8.3px;color:#222;font-weight:normal;text-align:right;">75,28 %</div>
<div class="t" style="right:47.70px;top:383.05px;font-size:8.3px;color:#222;font-weight:normal;text-align:right;">0,00 US$</div>
<div class="t" style="right:15.60px;top:384.28px;font-size:6.6px;color:#777;font-weight:normal;text-align:right;">(0,00 %)</div>
<div style="position:absolute;left:181px;top:407.90000000000003px;width:8px;height:8px;background:#ededed;border:1px solid #c9c9c9;border-radius:1.5px;box-sizing:border-box"></div>
<div class="t" style="right:812.00px;top:408.55px;font-size:8.3px;color:#444;font-weight:normal;text-align:right;">10.</div>
<svg style="position:absolute;left:367px;top:407.60px" width="10" height="10" viewBox="0 0 10 10"><rect x="3.2" y="0.9" width="5.6" height="5.6" rx="1" fill="#fff" stroke="#9a9a9a" stroke-width="0.9"/><rect x="5.1" y="2.6" width="2.2" height="2.2" fill="#777"/><path d="M3 3.4 H1.9 Q0.9 3.4 0.9 4.4 V8.2 Q0.9 9.1 1.9 9.1 H4.9 Q5.9 9.1 5.9 8.1 V7" fill="none" stroke="#9a9a9a" stroke-width="0.9"/></svg>
<div class="t" style="right:589.00px;top:408.55px;font-size:8.3px;color:#222;font-weight:bold;text-align:right;">167</div>
<div class="t" style="right:557.30px;top:409.78px;font-size:6.6px;color:#777;font-weight:normal;text-align:right;">(0,94 %)</div>
<div class="t" style="right:488.00px;top:408.55px;font-size:8.3px;color:#222;font-weight:normal;text-align:right;">138</div>
<div class="t" style="right:455.40px;top:409.78px;font-size:6.6px;color:#777;font-weight:normal;text-align:right;">(0,89 %)</div>
<div class="t" style="right:355.00px;top:408.55px;font-size:8.3px;color:#222;font-weight:normal;text-align:right;">00:06:09</div>
<div class="t" style="right:309.00px;top:408.55px;font-size:8.3px;color:#222;font-weight:normal;text-align:right;">119</div>
<div class="t" style="right:275.90px;top:409.78px;font-size:6.6px;color:#777;font-weight:normal;text-align:right;">(0,99 %)</div>
<div class="t" style="right:185.60px;top:408.55px;font-size:8.3px;color:#222;font-weight:normal;text-align:right;">74,79 %</div>
<div class="t" style="right:94.00px;top:408.55px;font-size:8.3px;color:#222;font-weight:normal;text-align:right;">74,25 %</div>
<div class="t" style="right:47.70px;top:408.55px;font-size:8.3px;color:#222;font-weight:normal;text-align:right;">0,00 US$</div>
<div class="t" style="right:15.60px;top:409.78px;font-size:6.6px;color:#777;font-weight:normal;text-align:right;">(0,00 %)</div>
<div class="t" style="left:221.80px;top:309.90px;font-size:9px;color:#4a7fd8;font-weight:normal;">/</div>
<svg style="position:absolute;left:0;top:0" width="1024" height="477"><g fill="#0000ff" stroke="#0000ff" stroke-width="0.4">
<path d="M221 196.5 Q221 194 225 193.8 L240 192.4 Q258 191.3 270 192.2 L286 193.5 Q296.5 194.2 296.5 197.6 Q296.5 200.8 292 200.6 L260 199.9 L241 199.6 L237 198.6 L225 199.2 Q221 199.2 221 196.5 Z"/>
<path d="M223.5 220 Q223.5 217.5 227 217.3 L232 217 Q232.5 214.2 236 214 L254 214 Q266 214.5 276 216.8 L296 217.3 Q300 217.5 300 219.6 Q300 222.2 296.5 222.2 L276 222 Q266 223.4 254 223.3 L228 222.6 Q223.5 222.5 223.5 220 Z"/>
<path d="M221.4 241.7 Q221.4 239.2 225 239.3 L260 239.8 Q300 240 340 238.8 L364 238 Q367.5 238 367.5 240.4 Q367.5 242.6 363 242.8 Q345 244 328 247.2 Q300 249.8 280 249.4 Q258 249 240 246.3 L225 244.3 Q221.4 244.2 221.4 241.7 Z"/>
<path d="M223 261 Q223 258.6 227 258.4 L250 257.8 Q262 258 266 259.6 L340 260.3 Q352 259.5 360 257 Q368 256.5 372 258.8 Q374.5 262 371 265 L355 265.5 Q345 268.5 339 269 L280 268.7 Q258 267.5 240 265 L232 264.3 L232 270.5 Q231.5 274.5 227 274.4 Q222.3 274 222.3 270 L222.5 262 Z"/>
<path d="M221.1 292 Q221.1 288.5 226 288.3 L255 288.3 Q264.2 288.6 264.2 292.5 Q264 296 258 296.2 Q245 296.9 235 296.5 L226 295.5 Q221.1 295 221.1 292 Z"/>
<path d="M222.3 335 Q222.3 332.8 226 332.8 L300 331.2 Q330 330.2 350 331.5 L368 332.3 Q371.2 332.5 371.2 334.5 Q371 337 367 337.2 L340 338.6 Q310 340.5 280 340.5 L240 340.2 L230 340.4 L230 341 L270 341.5 Q276.5 342.5 276.3 345.3 Q276 348.5 270 348.5 L230 348.4 Q222.3 348 222.3 344.5 Q222.3 341 225 340 Q222.3 338.5 222.3 335 Z"/>
<path d="M221.1 364.5 Q221 361.5 226 361.5 Q238 361.3 246 363 Q265 363.5 290 362.3 Q315 361.5 345 362.2 Q350.2 362.8 350.2 365.3 Q350 368.5 345 368.4 L300 368.3 Q270 369.2 250 368.8 L228 367.8 Q221.1 367.5 221.1 364.5 Z"/>
<path d="M222.7 387.2 Q222.7 384.8 226 384.7 L270 384.2 Q278 384.5 283 385.5 Q285 383.6 290 383.6 L318 383.6 Q321 383.8 322 385.8 L362 385.8 Q365.8 386 365.8 388 Q365.8 390.4 362 390.3 L325 390.8 Q320 392.4 300 392.4 L290 392.3 Q282 392 280 390 L227 389.9 Q222.7 389.8 222.7 387.2 Z"/>
<path d="M226 404.6 Q235 403.2 245 403.5 Q262 404 275 405.8 Q310 406.2 340 406.5 Q355 405.5 366 404.2 Q371.3 404.5 371.3 407.5 Q371 410.5 366 410.8 Q345 413.5 320 414 Q295 413.8 280 413.2 Q265 411.5 260 410.2 L240 409.2 L228 409.2 Q225 409.5 225.2 412 Q225.5 414.6 229 414.8 L234.5 414.8 Q237.8 415 237.8 417.5 Q237.6 420.2 234 420.2 L226 420.1 Q219 419.5 219 413 Q219 405.5 226 404.6 Z"/>
</g></svg>
<div class="t" style="right:179.90px;top:435.64px;font-size:7.5px;color:#333;font-weight:normal;text-align:right;">Mostrar filas:</div>
<div style="position:absolute;left:848px;top:432.3px;width:31.7px;height:14.7px;background:#fff;border:1px solid #c8c8c8;border-radius:2px;box-sizing:border-box"></div>
<div class="t" style="left:851.50px;top:436.14px;font-size:7.5px;color:#222;font-weight:normal;">10</div>
<svg style="position:absolute;left:869.5px;top:437.5px" width="7" height="5"><path d="M0.3 0.3 L6 0.3 L3.15 4z" fill="#111"/></svg>
<div class="t" style="left:882.80px;top:435.78px;font-size:7.2px;color:#333;font-weight:normal;">Ir a:</div>
<div style="position:absolute;left:897.4px;top:431.9px;width:20.3px;height:15.1px;background:#fff;border:1px solid #c8c8c8;box-sizing:border-box"></div>
<div class="t" style="left:902.00px;top:435.94px;font-size:7.5px;color:#222;font-weight:normal;">1</div>
<div class="t" style="left:921.40px;top:435.86px;font-size:7.05px;color:#333;font-weight:normal;">1 - 10 de 1375</div>
<div style="position:absolute;left:970.1px;top:431.3px;width:36.4px;height:14.4px;background:linear-gradient(#f8f8f8,#e4e4e4);border:1px solid #cfcfcf;border-radius:2px;box-sizing:border-box"></div>
<div style="position:absolute;left:988.2px;top:432px;width:1px;height:13px;background:#d8d8d8"></div>
<svg style="position:absolute;left:976px;top:434.5px" width="26" height="9"><path d="M4.6 1.3 L2.2 4.3 L4.6 7.3 M20 1.3 L22.4 4.3 L20 7.3" fill="none" stroke="#111" stroke-width="1.5"/></svg>
<div class="t" style="left:801.70px;top:453.38px;font-size:7.2px;color:#555;font-weight:normal;">Este informe se creó el 2/3/20 a las 10:46:23. - <span style="color:#3367d6">Actualizar informe</span></div>
<div style="position:absolute;left:0px;top:0px;width:1024px;height:477px;box-sizing:border-box;border:1px solid #ff4545;z-index:50"></div></body></html>
